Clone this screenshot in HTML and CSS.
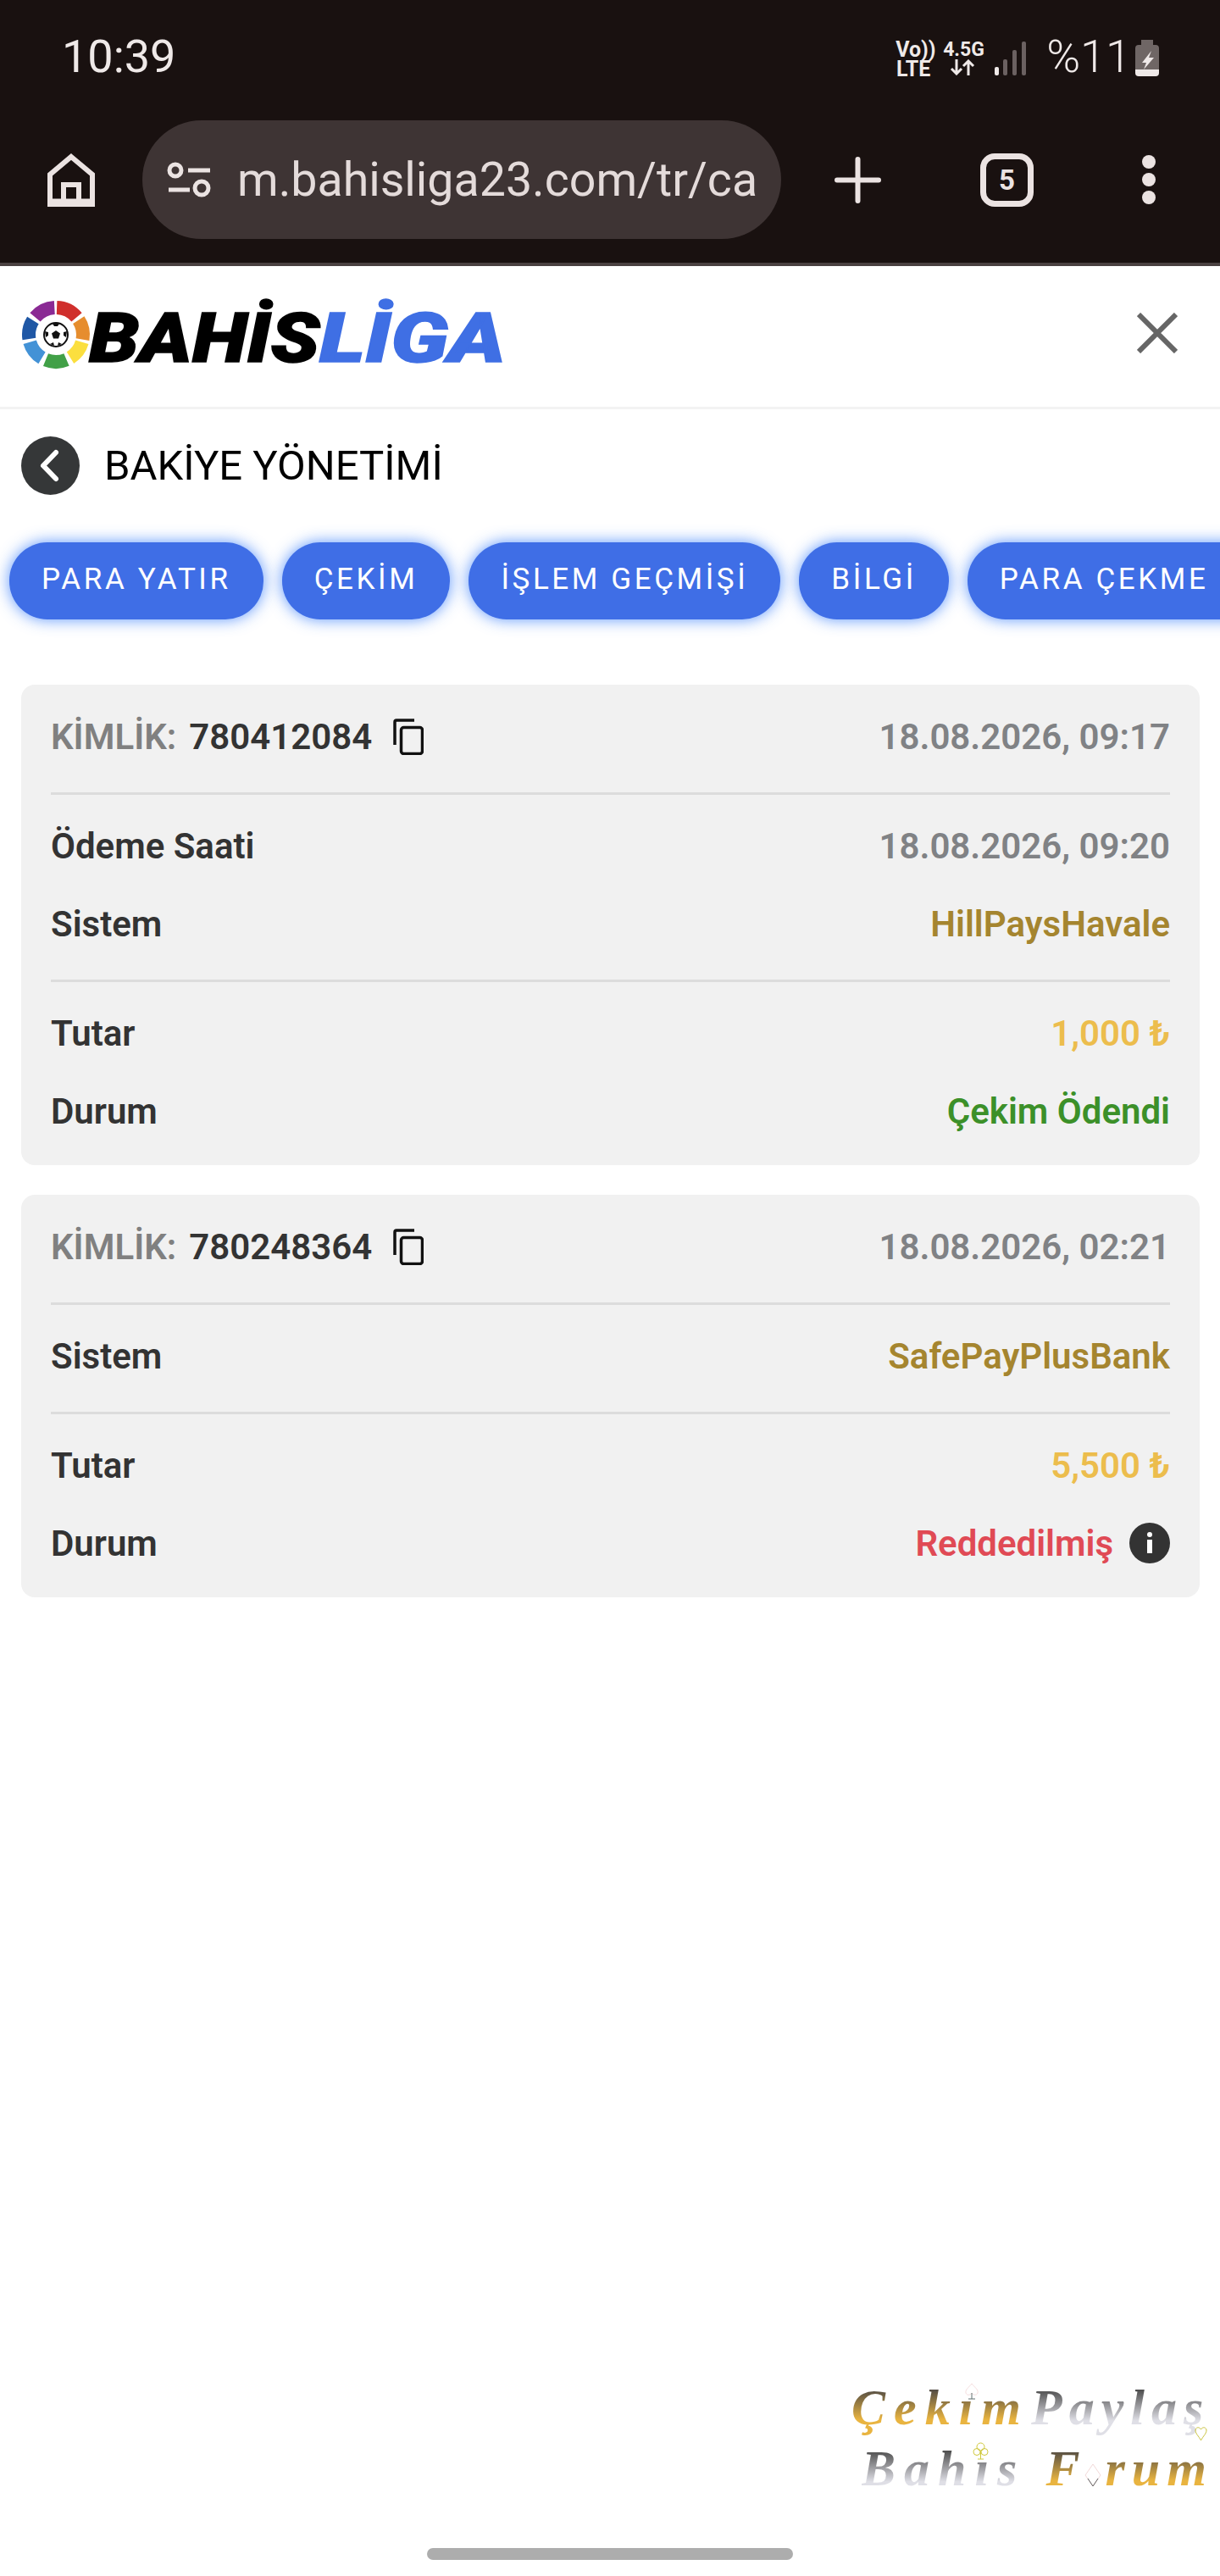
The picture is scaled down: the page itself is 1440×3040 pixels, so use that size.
FILE: index.html
```html
<!DOCTYPE html>
<html lang="tr">
<head>
  <meta charset="UTF-8" />
  <meta name="viewport" content="width=device-width, initial-scale=1.0"/>
  <title>Bakiye Yönetimi</title>
  <link rel="stylesheet" href="styles.css">
</head>
<body>
  <div class="page">
    <div class="browser-bar">
      <div class="status-row">
        <span class="clock">10:39</span>
        <div class="status-icons">
          <span class="net net-volte">Vo))<br>LTE</span>
          <span class="net net-data">4.5G
            <svg class="net-arrows" width="30" height="19" viewBox="0 0 30 19" fill="none" stroke="#efe9e8" stroke-width="3">
              <path d="M8 0V17M2 11l6 6 6-6"/>
              <path d="M22 19V2M16 8l6-6 6 6"/>
            </svg>
          </span>
          <svg class="signal" width="37" height="40" viewBox="0 0 37 40">
            <rect x="0" y="30" width="5" height="10" rx="2" fill="#efe9e8"/>
            <rect x="10" y="21" width="5" height="19" rx="2" fill="#6b6161"/>
            <rect x="21" y="10" width="5" height="30" rx="2" fill="#6b6161"/>
            <rect x="32" y="0" width="5" height="40" rx="2" fill="#6b6161"/>
          </svg>
          <span class="battery-text">%11</span>
          <svg class="battery" width="28" height="43" viewBox="0 0 28 43">
            <path d="M7 0h14v6h3a4 4 0 0 1 4 4v25H0V10a4 4 0 0 1 4-4h3z" fill="#6f6665"/>
            <path d="M0 35h28v4a4 4 0 0 1-4 4H4a4 4 0 0 1-4-4z" fill="#efe9e8"/>
            <path d="M19 13L8 27H13L10 35L22 21H16Z" fill="#efe9e8"/>
          </svg>
        </div>
      </div>
      <div class="toolbar">
        <svg class="home-icon" width="56" height="63" viewBox="0 0 56 63" fill="none" stroke="#ebe3e2" stroke-width="6">
          <path d="M28 4L53 25V60H3V25Z"/>
          <path d="M19 58V37H37V58" stroke-width="6"/>
          <path d="M3 57H53" stroke-width="7"/>
        </svg>
        <div class="url-pill">
          <svg class="tune-icon" width="53" height="42" viewBox="0 0 53 42" fill="none" stroke="#ebe3e2" stroke-width="5">
            <circle cx="10" cy="10" r="7"/>
            <path d="M25 10H51"/>
            <path d="M2 33H27"/>
            <circle cx="41" cy="31" r="8"/>
          </svg>
          <span class="url-text">m.bahisliga23.com/tr/ca</span>
        </div>
        <svg class="plus-icon" width="55" height="55" viewBox="0 0 55 55" fill="none" stroke="#ebe3e2" stroke-width="6" stroke-linecap="round">
          <path d="M27.5 3V52M3 27.5H52"/>
        </svg>
        <div class="tab-count">5</div>
        <div class="menu-dots"><i></i><i></i><i></i></div>
      </div>
    </div>

    <header class="site-header">
      <svg class="logo" width="572" height="104" viewBox="0 0 572 104">
        <g transform="translate(41 50)" fill="none" stroke-width="16">
          <path d="M1.1 -32A32 32 0 0 1 24.5 -20.6" stroke="#d02f2c"/>
          <path d="M26.8 -17.4A32 32 0 0 1 31.5 5.6" stroke="#e68d2e"/>
          <path d="M30.8 8.8A32 32 0 0 1 17 27.1" stroke="#fbdf3e"/>
          <path d="M12.5 29.5A32 32 0 0 1 -12 29.7" stroke="#41a047"/>
          <path d="M-16.5 27.4A32 32 0 0 1 -30.8 8.8" stroke="#4392d6"/>
          <path d="M-31.6 5A32 32 0 0 1 -27.1 -17" stroke="#1f57a5"/>
          <path d="M-24.5 -20.6A32 32 0 0 1 -1.7 -32" stroke="#8a2a94"/>
          <circle r="14" fill="#fff" stroke="#111" stroke-width="2"/>
          <path d="M0 -5L5 -1.5L3 4.5H-3L-5 -1.5Z" fill="#111" stroke="none"/>
          <path d="M-4 -13L4 -13L2 -10H-2ZM13 -4L12 3L9 1V-3ZM-13 -4L-12 3L-9 1V-3ZM-7 11L-2 13L-3 9ZM7 11L2 13L3 9Z" fill="#111" stroke="none"/>
        </g>
        <text class="logo-word" x="80" y="82" textLength="272" lengthAdjust="spacingAndGlyphs" fill="#000" stroke="#000">BAHİS</text>
        <text class="logo-word" x="352" y="82" textLength="220" lengthAdjust="spacingAndGlyphs" fill="#3f6fe4" stroke="#3f6fe4">LİGA</text>
      </svg>
      <svg class="close-icon" width="48" height="48" viewBox="0 0 48 48" fill="none" stroke="#666" stroke-width="6">
        <path d="M2 2L46 46M46 2L2 46"/>
      </svg>
    </header>

    <div class="page-title">
      <span class="back-btn">
        <svg width="69" height="69" viewBox="0 0 69 69" fill="none" stroke="#fff" stroke-width="6" stroke-linecap="round" stroke-linejoin="round">
          <path d="M41 19L26 34.5L41 50"/>
        </svg>
      </span>
      <h1>BAKİYE YÖNETİMİ</h1>
    </div>

    <nav class="tabs">
      <a class="tab">PARA YATIR</a>
      <a class="tab">ÇEKİM</a>
      <a class="tab">İŞLEM GEÇMİŞİ</a>
      <a class="tab">BİLGİ</a>
      <a class="tab">PARA ÇEKME İSTEĞİ</a>
    </nav>

    <section class="card">
      <div class="card-part card-head">
        <div class="row">
          <span class="id-wrap">
            <span class="id-label">KİMLİK:</span>
            <span class="id-num">780412084</span>
            <svg class="copy-icon" width="36" height="43" viewBox="0 0 36 43" fill="none" stroke="#111" stroke-width="3.5">
              <path d="M2 31V4Q2 2 4 2H25"/>
              <rect x="9.5" y="10.5" width="25" height="31" rx="3"/>
            </svg>
          </span>
          <span class="date">18.08.2026, 09:17</span>
        </div>
      </div>
      <div class="card-part">
        <div class="row"><span class="label">Ödeme Saati</span><span class="date">18.08.2026, 09:20</span></div>
        <div class="row"><span class="label">Sistem</span><span class="system">HillPaysHavale</span></div>
      </div>
      <div class="card-part card-last">
        <div class="row"><span class="label">Tutar</span><span class="amount">1,000 ₺</span></div>
        <div class="row"><span class="label">Durum</span><span class="paid">Çekim Ödendi</span></div>
      </div>
    </section>

    <section class="card">
      <div class="card-part card-head">
        <div class="row">
          <span class="id-wrap">
            <span class="id-label">KİMLİK:</span>
            <span class="id-num">780248364</span>
            <svg class="copy-icon" width="36" height="43" viewBox="0 0 36 43" fill="none" stroke="#111" stroke-width="3.5">
              <path d="M2 31V4Q2 2 4 2H25"/>
              <rect x="9.5" y="10.5" width="25" height="31" rx="3"/>
            </svg>
          </span>
          <span class="date">18.08.2026, 02:21</span>
        </div>
      </div>
      <div class="card-part">
        <div class="row"><span class="label">Sistem</span><span class="system">SafePayPlusBank</span></div>
      </div>
      <div class="card-part card-last">
        <div class="row"><span class="label">Tutar</span><span class="amount">5,500 ₺</span></div>
        <div class="row">
          <span class="label">Durum</span>
          <span class="rejected">Reddedilmiş
            <svg class="info-icon" width="48" height="48" viewBox="0 0 48 48">
              <circle cx="24" cy="24" r="24" fill="#333"/>
              <rect x="21" y="20" width="6" height="16" fill="#fff"/>
              <rect x="21" y="11" width="6" height="6" rx="3" fill="#fff"/>
            </svg>
          </span>
        </div>
      </div>
    </section>

    <div class="watermark">
      <div class="wm-line">
        <span class="wm-gold">Çekım</span>
        <span class="wm-grey wm-tight">Paylaş</span>
      </div>
      <div class="wm-line wm-line-two">
        <span class="wm-grey">Bahıs</span>
        <span class="wm-gold wm-tight">F<svg class="wm-diamond" width="20" height="28" viewBox="0 0 20 28" fill="none" stroke-width="1"><path d="M10 1L19 14L10 27L1 14Z" stroke="#f2d9d9"/><path d="M4 18L10 27L16 18" stroke="#666"/></svg>rum</span>
      </div>
      <svg class="wm-suit wm-spade" width="18" height="20" viewBox="0 0 18 20" fill="none" stroke="#f6dede">
        <path d="M9 1C12 5 17 8 16 12C15 15 11 15 9 12C7 15 3 15 2 12C1 8 6 5 9 1Z"/>
        <path d="M9 12V19M5 19H13" stroke="#607070"/>
      </svg>
      <svg class="wm-suit wm-heart" width="15" height="18" viewBox="0 0 15 18" fill="none" stroke="#c9c23a">
        <path d="M7.5 17C5 12 1 9 1 5C1 2 5 0 7.5 4C10 0 14 2 14 5C14 9 10 12 7.5 17Z"/>
      </svg>
      <svg class="wm-suit wm-club" width="19" height="21" viewBox="0 0 19 21" fill="none" stroke="#cfc83c">
        <circle cx="9.5" cy="5.5" r="4.5"/>
        <circle cx="5" cy="11.5" r="4"/>
        <circle cx="14" cy="11.5" r="4"/>
        <path d="M9.5 10V20M6 20H13"/>
      </svg>
    </div>

    <div class="home-bar"></div>
  </div>
</body>
</html>
```

FILE: styles.css
```css
* {
  box-sizing: border-box;
}

body {
  margin: 0;
  padding: 0;
  font-family: Roboto, "Liberation Sans", sans-serif;
  background-color: #fff;
  color: #333;
}

.page {
  position: relative;
  width: 1440px;
  height: 3040px;
  overflow: hidden;
  background-color: #fff;
}

/* phone status + chrome toolbar */
.browser-bar {
  height: 314px;
  background-color: #191110;
  border-bottom: 4px solid #4a4141;
  color: #efe9e8;
}

.status-row {
  display: flex;
  justify-content: space-between;
  height: 142px;
  padding: 36px 72px 0 73px;
}

.clock {
  font-size: 54px;
  line-height: 62px;
  font-weight: 400;
}

.status-icons {
  display: flex;
  align-items: flex-start;
  padding-top: 11px;
}

.net {
  display: block;
  font-weight: 700;
  text-align: center;
}

.net-volte {
  width: 42px;
  font-size: 25px;
  line-height: 23px;
  margin-top: 0;
}

.net-data {
  width: 46px;
  margin-left: 14px;
  font-size: 23px;
  line-height: 23px;
}

.net-arrows {
  display: block;
  margin: 0 auto;
}

.signal {
  margin: 2px 0 0 15px;
}

.battery-text {
  margin: -10px 0 0 24px;
  font-size: 54px;
  line-height: 60px;
  font-weight: 300;
}

.battery {
  margin-left: 5px;
}

.toolbar {
  display: flex;
  align-items: center;
  height: 140px;
  padding-left: 56px;
}

.url-pill {
  display: flex;
  align-items: center;
  width: 754px;
  height: 140px;
  margin-left: 56px;
  padding-left: 29px;
  background-color: #3e3434;
  border-radius: 70px;
  overflow: hidden;
}

.url-text {
  margin-left: 30px;
  font-size: 55.5px;
  color: #e4dbda;
  white-space: nowrap;
}

.plus-icon {
  margin-left: 63px;
}

.tab-count {
  width: 63px;
  height: 63px;
  margin-left: 117px;
  border: 7px solid #ebe3e2;
  border-radius: 17px;
  font-size: 33px;
  font-weight: 700;
  line-height: 49px;
  text-align: center;
  color: #ebe3e2;
}

.menu-dots {
  display: flex;
  flex-direction: column;
  gap: 5px;
  margin-left: 128px;
}

.menu-dots i {
  display: block;
  width: 16px;
  height: 16px;
  border-radius: 50%;
  background-color: #ebe3e2;
}

/* site header */
.site-header {
  display: flex;
  align-items: center;
  justify-content: space-between;
  height: 169px;
  padding: 0 50px 0 25px;
  border-bottom: 3px solid #f3f3f3;
}

.logo-word {
  font-family: Roboto, "Liberation Sans", sans-serif;
  font-size: 82px;
  font-weight: 900;
  font-style: italic;
  stroke-width: 1.5;
}

.close-icon {
  margin-top: -8px;
}

.page-title {
  display: flex;
  align-items: center;
  gap: 29px;
  margin-top: 32px;
  padding-left: 25px;
}

.back-btn {
  display: block;
  width: 69px;
  height: 69px;
  border-radius: 50%;
  background-color: #353738;
}

.page-title h1 {
  margin: 0;
  font-size: 49px;
  font-weight: 400;
  color: #000;
}

.tabs {
  display: flex;
  gap: 22px;
  margin-top: 26px;
  padding: 30px 0 30px 11px;
  overflow: hidden;
}

.tab {
  flex-shrink: 0;
  height: 91px;
  padding: 0 38px;
  background-color: #3f6ee6;
  border-radius: 45px;
  box-shadow: 0 0 18px rgba(63, 130, 250, 0.85);
  font-size: 35px;
  line-height: 88px;
  letter-spacing: 3.6px;
  color: #fff;
  white-space: nowrap;
}

/* transaction cards */
.card {
  margin: 47px 24px 35px 25px;
  padding: 0 35px 39px;
  background-color: #f1f1f1;
  border-radius: 16px;
}

.card + .card {
  margin-top: 0;
}

.card-part {
  display: flex;
  flex-direction: column;
  gap: 42px;
  padding: 35px 0 41px;
  border-bottom: 3px solid #dcdcdc;
}

.card-head {
  padding-top: 36px;
}

.card-last {
  padding-bottom: 0;
  border-bottom: none;
}

.row {
  display: flex;
  align-items: center;
  justify-content: space-between;
  height: 50px;
  font-size: 42px;
  font-weight: 650;
}

.id-wrap {
  display: flex;
  align-items: center;
}

.id-label {
  color: #808080;
}

.id-num {
  margin-left: 15px;
  color: #333;
}

.copy-icon {
  margin-left: 25px;
}

.label {
  color: #333;
}

.date {
  color: #808285;
}

.system {
  color: #a5852f;
}

.amount {
  color: #ecbd4d;
}

.paid {
  color: #3c9029;
}

.rejected {
  display: flex;
  align-items: center;
  gap: 19px;
  color: #e04a55;
}

/* forum watermark laid over the page */
.watermark {
  position: absolute;
  left: 1005px;
  top: 2805px;
  width: 435px;
  font-family: "Liberation Serif", serif;
  font-size: 60px;
  font-weight: 700;
  font-style: italic;
  line-height: 72px;
  letter-spacing: 10px;
  white-space: nowrap;
}

.wm-line {
  display: flex;
  gap: 2px;
}

.wm-line-two {
  gap: 24px;
  padding-left: 12px;
}

.wm-gold,
.wm-grey {
  display: inline-block;
  -webkit-background-clip: text;
  background-clip: text;
  color: transparent;
}

.wm-tight {
  letter-spacing: 8px;
}

.wm-gold {
  background-image: linear-gradient(#4f4a44 20%, #e9b440 70%);
}

.wm-grey {
  background-image: linear-gradient(#4a4a4a 20%, #dfdfe6 72%);
}

.wm-diamond {
  margin: 0 4px 0 -2px;
  vertical-align: -2px;
}

.wm-suit {
  position: absolute;
}

.wm-spade {
  left: 133px;
  top: 7px;
}

.wm-heart {
  left: 405px;
  top: 58px;
}

.wm-club {
  left: 143px;
  top: 77px;
}

/* android gesture bar */
.home-bar {
  position: absolute;
  left: 504px;
  top: 3007px;
  width: 432px;
  height: 14px;
  border-radius: 7px;
  background-color: #adadad;
}
```
